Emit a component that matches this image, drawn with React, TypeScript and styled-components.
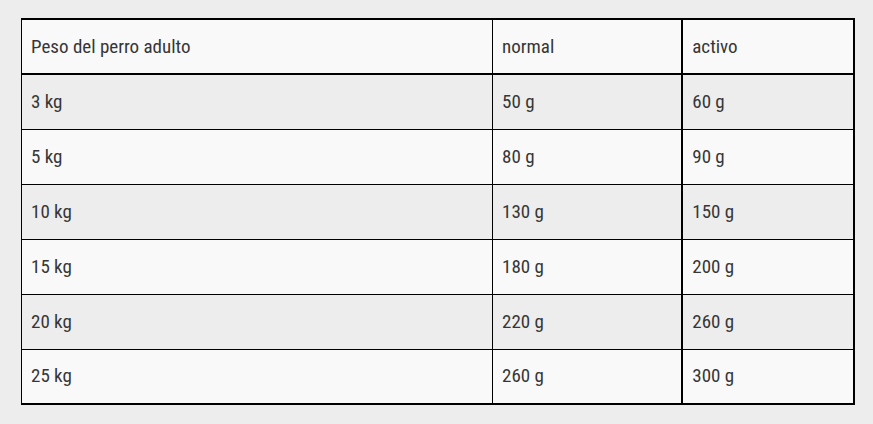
import React from "react";
import styled, { createGlobalStyle } from "styled-components";

const Global = createGlobalStyle`
  html, body { margin: 0; padding: 0; background: #ecedec; }
  body { font-family: Roboto, "Liberation Sans", sans-serif; }
`;

const Page = styled.div`
  padding: 18px 18px 20px 21px;
`;

const Table = styled.table`
  width: 834px;
  border-collapse: collapse;
  border-top: 2px solid #000;
  border-right: 2px solid #000;
  border-bottom: 2px solid #000;
  border-left: 1px solid #000;
  font-family: Roboto, "Liberation Sans Narrow", sans-serif;
  font-stretch: 75%;
  font-size: 19px;
  color: #363636;
`;

const Row = styled.tr<{ $shade: boolean }>`
  background: ${(p) => (p.$shade ? "#ecedec" : "#f9f9f9")};
`;

const Cell = styled.td<{ $w: number; $thick?: boolean; $head?: boolean }>`
  width: ${(p) => p.$w}px;
  height: 55px;
  padding: 0 10px 1px 9px;
  box-sizing: border-box;
  text-align: left;
  font-weight: 400;
  border-top: 1px solid #000;
  border-bottom: ${(p) => (p.$head ? "2px" : "1px")} solid #000;
  border-left: ${(p) => (p.$thick ? "2px" : "1px")} solid #000;
`;

const rows: [string, string, string][] = [
  ["3 kg", "50 g", "60 g"],
  ["5 kg", "80 g", "90 g"],
  ["10 kg", "130 g", "150 g"],
  ["15 kg", "180 g", "200 g"],
  ["20 kg", "220 g", "260 g"],
  ["25 kg", "260 g", "300 g"],
];

export default function App() {
  return (
    <>
      <Global />
      <Page>
        <Table>
          <thead>
            <Row $shade={false}>
              <Cell as="th" $w={472} $head>Peso del perro adulto</Cell>
              <Cell as="th" $w={190} $head>normal</Cell>
              <Cell as="th" $w={172} $head $thick>activo</Cell>
            </Row>
          </thead>
          <tbody>
            {rows.map((r, i) => (
              <Row key={i} $shade={i % 2 === 0}>
                <Cell $w={472}>{r[0]}</Cell>
                <Cell $w={190}>{r[1]}</Cell>
                <Cell $w={172} $thick>{r[2]}</Cell>
              </Row>
            ))}
          </tbody>
        </Table>
      </Page>
    </>
  );
}
